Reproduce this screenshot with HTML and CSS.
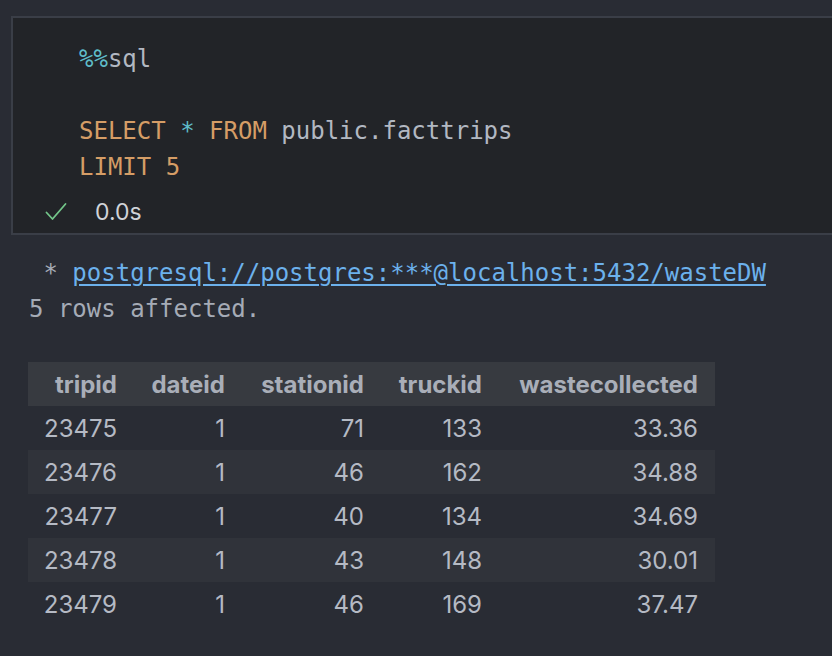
FILE: index.html
```html
<!DOCTYPE html>
<html>
<head>
<meta charset="utf-8">
<link rel="stylesheet" href="styles.css">
</head>
<body>
<div class="cell">
  <div class="code">
    <div class="line"><span class="op">%%</span>sql</div>
    <div class="line">&nbsp;</div>
    <div class="line"><span class="kw">SELECT</span> <span class="op">*</span> <span class="kw">FROM</span> public.facttrips</div>
    <div class="line"><span class="kw">LIMIT 5</span></div>
  </div>
  <div class="status">
    <svg class="check" width="22" height="20" viewBox="0 0 22 20"><path d="M1.5 10.5 L7.5 17 L20.5 2" fill="none" stroke="#73c68a" stroke-width="1.8" stroke-linecap="round" stroke-linejoin="round"/></svg>
    <span class="time">0.0s</span>
  </div>
</div>
<div class="output">
  <div class="line"> * <a class="link">postgresql://postgres:***@localhost:5432/wasteDW</a></div>
  <div class="line">5 rows affected.</div>
  <table class="result">
    <thead>
      <tr><th class="c1">tripid</th><th class="c2">dateid</th><th class="c3">stationid</th><th class="c4">truckid</th><th class="c5">wastecollected</th></tr>
    </thead>
    <tbody>
      <tr><td>23475</td><td>1</td><td>71</td><td>133</td><td>33.36</td></tr>
      <tr><td>23476</td><td>1</td><td>46</td><td>162</td><td>34.88</td></tr>
      <tr><td>23477</td><td>1</td><td>40</td><td>134</td><td>34.69</td></tr>
      <tr><td>23478</td><td>1</td><td>43</td><td>148</td><td>30.01</td></tr>
      <tr><td>23479</td><td>1</td><td>46</td><td>169</td><td>37.47</td></tr>
    </tbody>
  </table>
</div>
</body>
</html>
```
FILE: styles.css
```css
html, body {
  margin: 0;
  padding: 0;
  background: #292c34;
  width: 832px;
  height: 656px;
  overflow: hidden;
}
body {
  padding-top: 16px;
  box-sizing: border-box;
}
.cell {
  margin-left: 11px;
  width: 840px;
  height: 219px;
  box-sizing: border-box;
  border: 2px solid #3a3e47;
  background: #222428;
  padding: 23px 0 0 66px;
}
.code .line, .output .line {
  font-family: "DejaVu Sans Mono", monospace;
  font-size: 24px;
  line-height: 36px;
  height: 36px;
  white-space: pre;
}
.code .line {
  color: #b2b8c2;
}
.kw { color: #d59d66; }
.op { color: #5fbcc8; }
.status {
  display: flex;
  align-items: center;
  margin-left: -34px;
  margin-top: 14px;
  height: 26px;
}
.check {
  display: block;
}
.time {
  margin-left: 28px;
  font-family: Inter, "Liberation Sans", sans-serif;
  font-size: 23px;
  color: #d0d3d8;
}
.output {
  padding: 20px 0 0 29px;
}
.output .line {
  color: #a5abb6;
}
.link {
  color: #6cb1ec;
  text-decoration: underline;
  text-underline-offset: 3px;
}
.result {
  margin-top: 35px;
  margin-left: -1px;
  border-collapse: collapse;
  table-layout: fixed;
  font-family: Inter, "Liberation Sans", sans-serif;
  font-size: 24px;
  color: #b5bac4;
}
.result th, .result td {
  height: 44px;
  padding: 0 17px 0 0;
  text-align: right;
  box-sizing: border-box;
  white-space: nowrap;
}
.result th {
  font-weight: 700;
  background: #373a40;
  color: #a9aeb8;
}
.result .c1 { width: 106px; }
.result .c2 { width: 108px; }
.result .c3 { width: 139px; }
.result .c4 { width: 118px; }
.result .c5 { width: 216px; }
.result tbody tr:nth-child(even) td {
  background: #30333a;
}
```
